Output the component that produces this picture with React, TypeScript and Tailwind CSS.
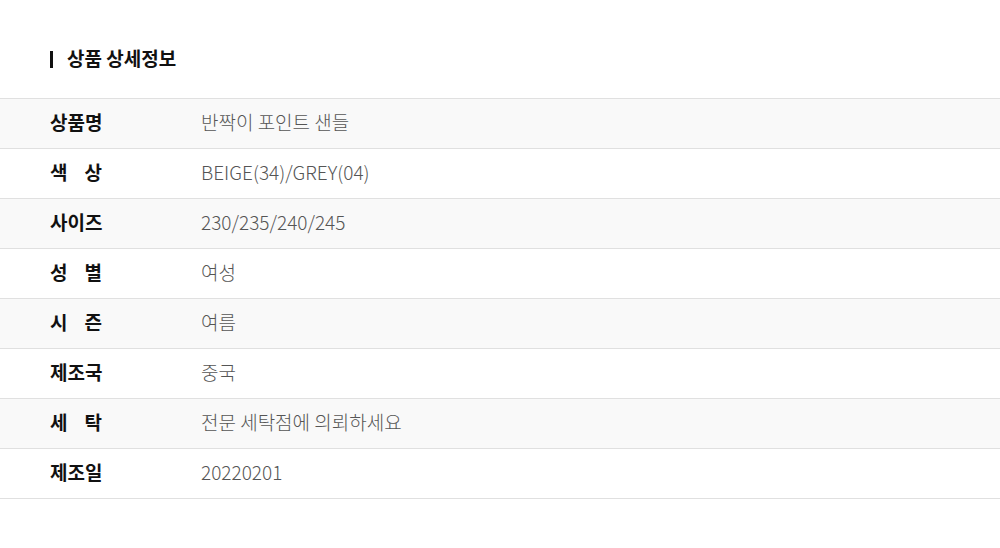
import React from 'react';

const rows: { label: string[]; value: string }[] = [
  { label: ['상품명'], value: '반짝이 포인트 샌들' },
  { label: ['색', '상'], value: 'BEIGE(34)/GREY(04)' },
  { label: ['사이즈'], value: '230/235/240/245' },
  { label: ['성', '별'], value: '여성' },
  { label: ['시', '즌'], value: '여름' },
  { label: ['제조국'], value: '중국' },
  { label: ['세', '탁'], value: '전문 세탁점에 의뢰하세요' },
  { label: ['제조일'], value: '20220201' },
];

export default function App() {
  return (
    <div className="w-[1000px] h-[548px] bg-white font-['Noto_Sans_CJK_KR','Noto_Sans',sans-serif]">
      {/* 타이틀 */}
      <div className="pl-[50px] flex items-start h-[98px] pt-[48px]">
        <span className="w-[3px] h-[17px] bg-[#111] mt-[3px]"></span>
        <h2 className="ml-[14px] text-[19px] leading-[24px] font-bold text-[#111] -mt-[2px]">상품 상세정보</h2>
      </div>

      {/* 상세 테이블 */}
      <div className="border-t border-[#e0e0e0]">
        {rows.map((row, i) => (
          <div
            key={i}
            className={`flex items-center h-[50px] border-b border-[#e0e0e0] ${i % 2 === 0 ? 'bg-[#f9f9f9]' : 'bg-white'}`}
          >
            <div className="pl-[50px] w-[201px] -mt-[3px]">
              {row.label.length === 1 ? (
                <span className="text-[19px] leading-[24px] font-bold text-[#111]">{row.label[0]}</span>
              ) : (
                <span className="flex justify-between w-[52px] text-[19px] leading-[24px] font-bold text-[#111]">
                  <span>{row.label[0]}</span>
                  <span>{row.label[1]}</span>
                </span>
              )}
            </div>
            <div className="text-[19px] leading-[24px] font-light text-[#555] -mt-[3px]">{row.value}</div>
          </div>
        ))}
      </div>
    </div>
  );
}
